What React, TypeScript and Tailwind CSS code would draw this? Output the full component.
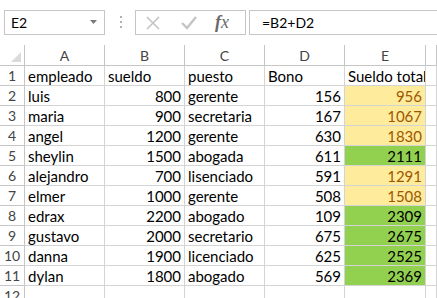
const rows = [
  { n: 1, a: 'empleado', b: 'sueldo', c: 'puesto', d: 'Bono', e: 'Sueldo total', head: true },
  { n: 2, a: 'luis', b: '800', c: 'gerente', d: '156', e: '956', tone: 'y' },
  { n: 3, a: 'maria', b: '900', c: 'secretaria', d: '167', e: '1067', tone: 'y' },
  { n: 4, a: 'angel', b: '1200', c: 'gerente', d: '630', e: '1830', tone: 'y' },
  { n: 5, a: 'sheylin', b: '1500', c: 'abogada', d: '611', e: '2111', tone: 'g' },
  { n: 6, a: 'alejandro', b: '700', c: 'lisenciado', d: '591', e: '1291', tone: 'y' },
  { n: 7, a: 'elmer', b: '1000', c: 'gerente', d: '508', e: '1508', tone: 'y' },
  { n: 8, a: 'edrax', b: '2200', c: 'abogado', d: '109', e: '2309', tone: 'g' },
  { n: 9, a: 'gustavo', b: '2000', c: 'secretario', d: '675', e: '2675', tone: 'g' },
  { n: 10, a: 'danna', b: '1900', c: 'licenciado', d: '625', e: '2525', tone: 'g' },
  { n: 11, a: 'dylan', b: '1800', c: 'abogado', d: '569', e: '2369', tone: 'g' },
];

const cell = 'h-[20px] border-r border-b border-[#d4d4d4] px-[3px] leading-[20px] whitespace-nowrap overflow-hidden';

const App = () => {
  return (
    <div className="h-[298px] w-[437px] overflow-hidden bg-white text-black" style={{ fontFamily: 'Lato, "Open Sans", sans-serif' }}>
      {/* formula bar */}
      <div className="flex h-[45px] items-start pt-[10px]">
        <div className="ml-[4px] flex h-[25px] w-[101px] items-center justify-between border border-[#c6c6c6] pl-[6px] pr-[6px] text-[14px]">
          <span>E2</span>
          <svg width="8" height="5" viewBox="0 0 8 5"><path d="M0 0h7L3.5 4z" fill="#7a7a7a" /></svg>
        </div>
        <div className="ml-[15px] mt-[6px] flex w-[4px] flex-col gap-[3px]">
          <span className="h-[2px] w-[2px] bg-[#b0b0b0]" />
          <span className="h-[2px] w-[2px] bg-[#b0b0b0]" />
          <span className="h-[2px] w-[2px] bg-[#b0b0b0]" />
        </div>
        <div className="ml-[11px] flex h-[25px] w-[111px] items-center border border-[#c6c6c6]">
          <svg className="ml-[9px]" width="16" height="16" viewBox="0 0 16 16">
            <path d="M2 2l12 12M14 2L2 14" stroke="#c4c4c4" strokeWidth="1.6" />
          </svg>
          <svg className="ml-[20px]" width="16" height="14" viewBox="0 0 16 14">
            <path d="M1 7l5 5L15 1" stroke="#c4c4c4" strokeWidth="2.4" fill="none" />
          </svg>
          <span className="ml-[18px] text-[18px] italic text-[#6a6a6a]" style={{ fontFamily: '"Liberation Serif", serif' }}>
            <b>f</b>x
          </span>
        </div>
        <div className="ml-[3px] flex h-[25px] flex-1 items-center border border-r-0 border-[#c6c6c6] pl-[12px] text-[14px]">
          =B2+D2
        </div>
      </div>

      {/* sheet */}
      <div className="grid grid-cols-[25px_80px_80px_80px_80px_81px_1fr] text-[15px]">
        <div className="relative h-[21px] border-r border-b border-[#c6c6c6]">
          <svg className="absolute bottom-[3px] right-[3px]" width="10" height="10" viewBox="0 0 10 10">
            <path d="M10 0v10H0z" fill="#dadada" />
          </svg>
        </div>
        {['A', 'B', 'C', 'D', 'E', ''].map((h, i) => (
          <div key={i} className="h-[21px] border-r border-b border-[#c6c6c6] text-center text-[14px] leading-[21px] text-[#444]">
            {h}
          </div>
        ))}

        {rows.map((r) => (
          <>
            <div key={'n' + r.n} className="h-[20px] border-r border-b border-[#c6c6c6] text-center text-[14px] leading-[20px] text-[#444]">
              {r.n}
            </div>
            <div className={cell}>{r.a}</div>
            <div className={`${cell} ${r.head ? '' : 'text-right'}`}>{r.b}</div>
            <div className={cell}>{r.c}</div>
            <div className={`${cell} ${r.head ? '' : 'text-right'}`}>{r.d}</div>
            <div
              className={`${cell} ${r.head ? '' : 'text-right'} ${
                r.tone === 'y' ? 'bg-[#ffeb9c] text-[#9c5700]' : r.tone === 'g' ? 'bg-[#92d050]' : ''
              }`}
            >
              {r.e}
            </div>
            <div className={cell}></div>
          </>
        ))}

        <div className="h-[20px] border-r border-b border-[#c6c6c6] text-center text-[14px] leading-[20px] text-[#444]">12</div>
        {[0, 1, 2, 3, 4, 5].map((i) => (
          <div key={'e' + i} className={cell}></div>
        ))}
      </div>
    </div>
  );
};

export default App;
